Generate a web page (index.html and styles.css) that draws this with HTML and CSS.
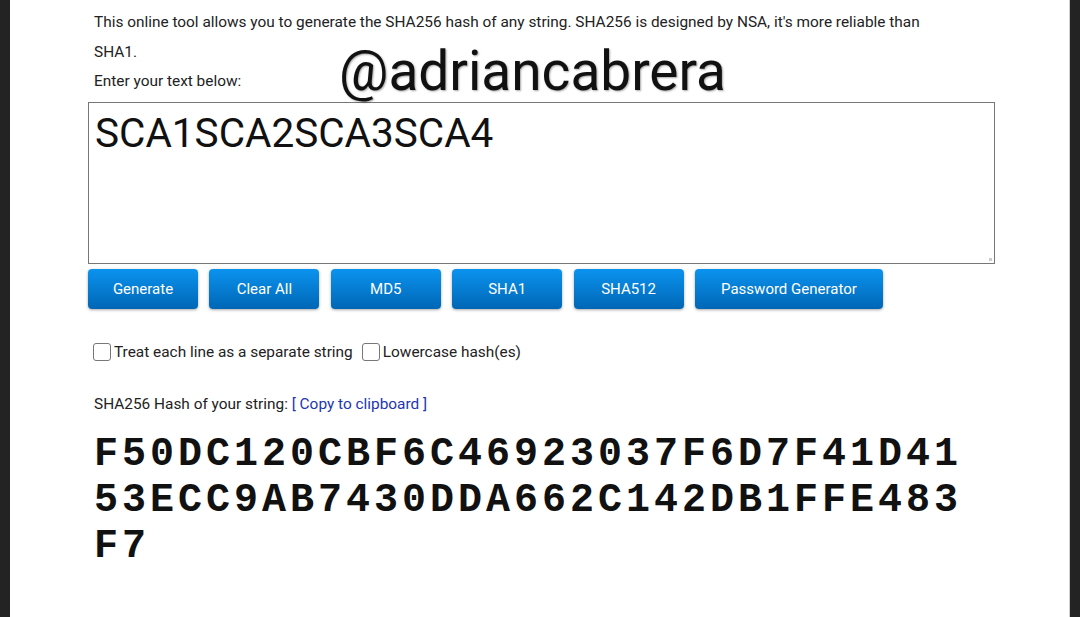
FILE: index.html
```html
<!DOCTYPE html>
<html>
<head>
<meta charset="utf-8">
<link rel="stylesheet" href="styles.css">
</head>
<body>
<div class="frame">
  <div class="side side-left"></div>
  <main class="panel">
    <div class="content">
      <p class="intro">This online tool allows you to generate the SHA256 hash of any string. SHA256 is designed by NSA, it's more reliable than SHA1.</p>
      <p class="prompt">Enter your text below:</p>
      <div class="input-box">SCA1SCA2SCA3SCA4<span class="grip"></span></div>
      <div class="buttons">
        <button class="btn">Generate</button>
        <button class="btn">Clear All</button>
        <button class="btn">MD5</button>
        <button class="btn">SHA1</button>
        <button class="btn">SHA512</button>
        <button class="btn btn-wide">Password Generator</button>
      </div>
      <div class="options">
        <label class="opt"><span class="box"></span>Treat each line as a separate string</label>
        <label class="opt"><span class="box"></span>Lowercase hash(es)</label>
      </div>
      <p class="result-label">SHA256 Hash of your string: <a class="copy">[ Copy to clipboard ]</a></p>
      <div class="hash">F50DC120CBF6C46923037F6D7F41D4153ECC9AB7430DDA662C142DB1FFE483F7</div>
    </div>
    <div class="watermark">@adriancabrera</div>
  </main>
  <div class="side side-right"></div>
</div>
</body>
</html>
```

FILE: styles.css
```css
* { box-sizing: border-box; }
html, body { margin: 0; padding: 0; }
body {
  width: 1080px;
  height: 617px;
  overflow: hidden;
  background: #ffffff;
  font-family: Roboto, "Liberation Sans", sans-serif;
  color: #222;
}
.frame {
  display: flex;
  width: 1080px;
  height: 617px;
}
.side {
  width: 10px;
  background: #232323;
  flex: none;
}
.side-right {
  border-left: 1px solid #cfcfcf;
  width: 11px;
}
.panel {
  position: relative;
  flex: 1;
  background: #fff;
}
.content {
  padding: 7px 0 0 78px;
  width: 990px;
}
.intro, .prompt {
  margin: 0;
  padding-left: 6px;
  font-size: 15.4px;
  line-height: 29.5px;
  width: 850px;
}
.intro { padding-top: 1px; }
.prompt { margin-bottom: 5px; }
.input-box {
  position: relative;
  width: 907px;
  height: 162px;
  border: 1px solid #777;
  padding: 6px 6px;
  font-size: 40.5px;
  line-height: 48px;
  color: #111;
}
.grip {
  position: absolute;
  right: 2px;
  bottom: 2px;
  width: 3px;
  height: 3px;
  background: #ccc;
}
.buttons {
  display: flex;
  gap: 11.4px;
  margin-top: 5px;
}
.btn {
  width: 110px;
  height: 40px;
  border: none;
  border-radius: 4px;
  background: linear-gradient(#0b93ef, #0066b5);
  box-shadow: 0 1px 3px rgba(0,0,0,0.35);
  color: #fff;
  font-family: Roboto, "Liberation Sans", sans-serif;
  font-size: 15px;
  padding: 0;
}
.btn-wide { width: 188px; }
.options {
  display: flex;
  gap: 9px;
  margin-top: 32px;
  padding-left: 5px;
}
.opt {
  display: flex;
  align-items: center;
  font-size: 15.4px;
  line-height: 22px;
  color: #222;
}
.box {
  width: 18px;
  height: 18px;
  border: 1px solid #777;
  border-radius: 3px;
  margin-right: 3px;
  background: #fff;
}
.result-label {
  margin: 30px 0 0;
  padding-left: 6px;
  font-size: 15.4px;
  line-height: 22px;
}
.copy { color: #1c36b0; }
.hash {
  margin-top: 17px;
  padding-left: 6px;
  width: 890px;
  word-break: break-all;
  font-family: "Courier New", "Nimbus Mono PS", "FreeMono", Courier, "Liberation Mono", monospace;
  font-weight: bold;
  font-size: 40px;
  line-height: 46px;
  letter-spacing: 4px;
  color: #111;
}
.watermark {
  position: absolute;
  left: 329px;
  top: 39px;
  font-family: Roboto, "Liberation Sans", sans-serif;
  font-size: 55px;
  line-height: 64px;
  color: #111;
  text-shadow: 1px 1px 2px rgba(0,0,0,0.35);
}
```
